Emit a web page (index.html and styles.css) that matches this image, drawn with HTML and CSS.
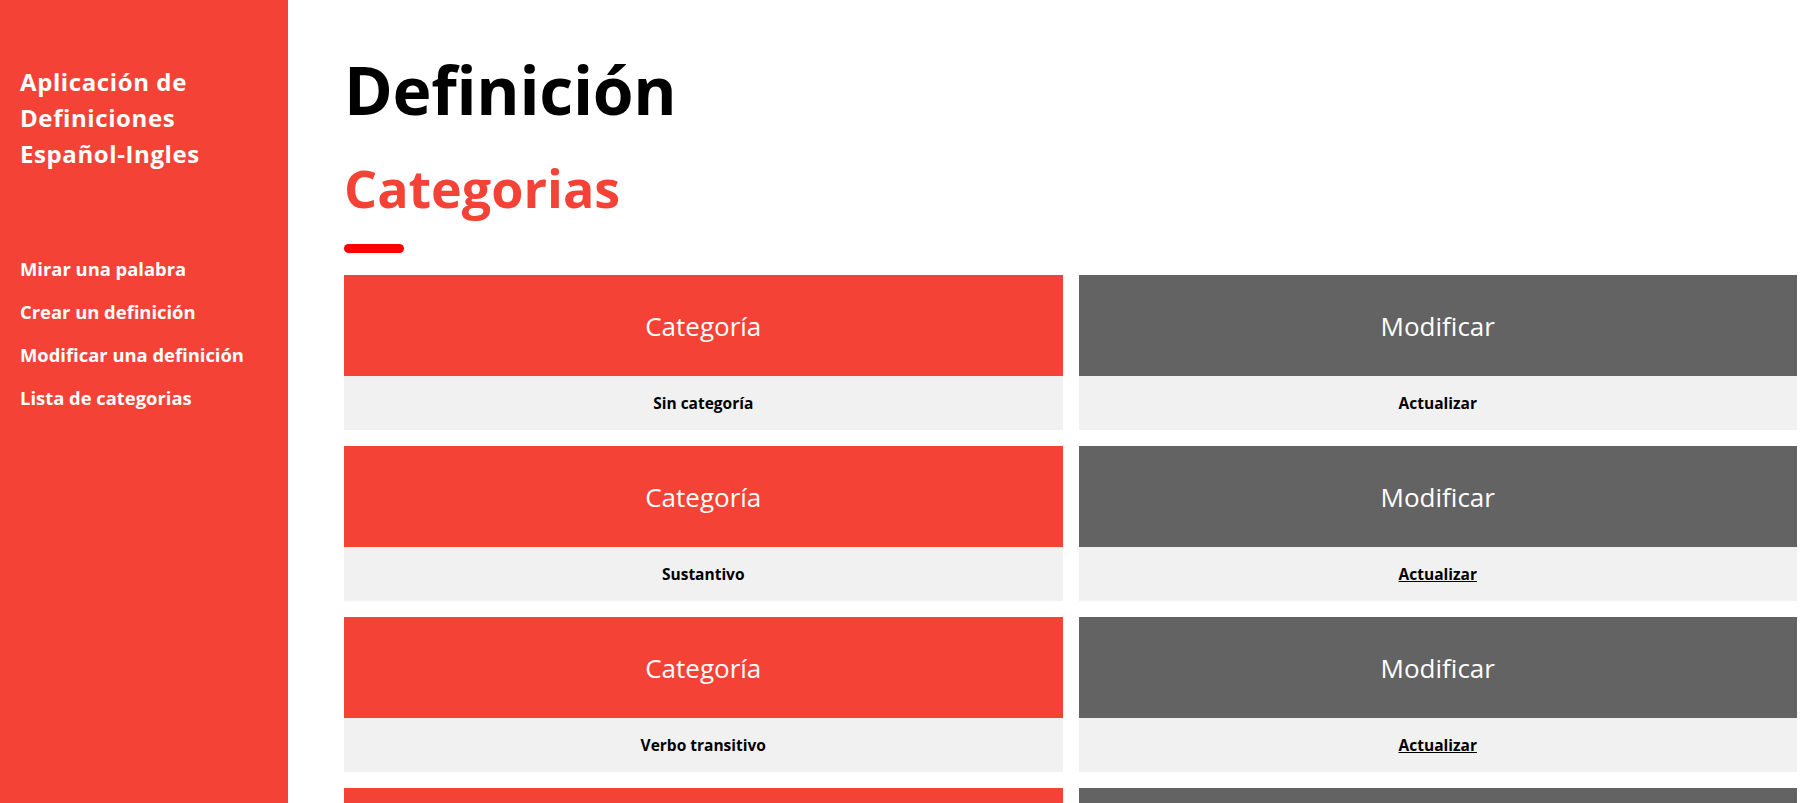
FILE: index.html
```html
<!DOCTYPE html>
<html lang="es">
<head>
<meta charset="utf-8">
<title>Definición</title>
<link rel="stylesheet" href="styles.css">
</head>
<body>
<aside class="sidebar">
  <h3 class="brand">Aplicación de Definiciones Español-Ingles</h3>
  <nav class="nav">
    <a href="#">Mirar una palabra</a>
    <a href="#">Crear un definición</a>
    <a href="#">Modificar una definición</a>
    <a href="#">Lista de categorias</a>
  </nav>
</aside>
<main class="main">
  <h1 class="title">Definición</h1>
  <h2 class="subtitle">Categorias</h2>
  <div class="bar"></div>
  <div class="list">
    <div class="card">
      <div class="head red">Categoría</div>
      <div class="cell">Sin categoría</div>
    </div>
    <div class="card">
      <div class="head grey">Modificar</div>
      <div class="cell">Actualizar</div>
    </div>
    <div class="card">
      <div class="head red">Categoría</div>
      <div class="cell">Sustantivo</div>
    </div>
    <div class="card">
      <div class="head grey">Modificar</div>
      <div class="cell"><a href="#">Actualizar</a></div>
    </div>
    <div class="card">
      <div class="head red">Categoría</div>
      <div class="cell">Verbo transitivo</div>
    </div>
    <div class="card">
      <div class="head grey">Modificar</div>
      <div class="cell"><a href="#">Actualizar</a></div>
    </div>
    <div class="card">
      <div class="head red">Categoría</div>
      <div class="cell">Verbo intransitivo</div>
    </div>
    <div class="card">
      <div class="head grey">Modificar</div>
      <div class="cell"><a href="#">Actualizar</a></div>
    </div>
  </div>
</main>
</body>
</html>
```
FILE: styles.css
```css
* { box-sizing: border-box; }
html, body { margin: 0; padding: 0; }
body {
  font-family: "Open Sans", "Noto Sans", sans-serif;
  color: #000;
  background: #fff;
  overflow: hidden;
  height: 803px;
}
.sidebar {
  position: fixed;
  left: 0;
  top: 0;
  bottom: 0;
  width: 288px;
  background: #F44336;
  color: #fff;
  padding: 64px 20px 0 20px;
}
.brand {
  margin: 0;
  font-size: 24px;
  line-height: 36px;
  font-weight: 700;
  letter-spacing: 0.6px;
  width: 220px;
}
.nav {
  display: flex;
  flex-direction: column;
  margin-top: 84px;
  gap: 18px;
}
.nav a {
  color: #fff;
  text-decoration: none;
  font-weight: 700;
  font-size: 18.4px;
  line-height: 25px;
}
.main {
  margin-left: 288px;
  padding: 44px 19px 0 56px;
}
.title {
  margin: 0;
  font-size: 66px;
  line-height: 90px;
  font-weight: 700;
  letter-spacing: -0.3px;
}
.subtitle {
  margin: 19px 0 0 0;
  font-size: 52px;
  line-height: 70px;
  font-weight: 700;
  color: #F44336;
}
.bar {
  width: 60px;
  height: 9px;
  background: #FF0000;
  border-radius: 5px;
  margin-top: 21px;
}
.list {
  margin-top: 22px;
  display: grid;
  grid-template-columns: 1fr 1fr;
  column-gap: 16px;
  row-gap: 16px;
}
.card {
  display: flex;
  flex-direction: column;
}
.head {
  height: 101px;
  display: flex;
  align-items: center;
  justify-content: center;
  color: #fff;
  font-size: 26px;
  font-weight: 400;
}
.red { background: #F44336; }
.grey { background: #636363; }
.cell {
  height: 54px;
  background: #F1F1F1;
  display: flex;
  align-items: center;
  justify-content: center;
  font-size: 15.5px;
  font-weight: 700;
}
.cell a { color: #000; text-decoration: underline; }
```
